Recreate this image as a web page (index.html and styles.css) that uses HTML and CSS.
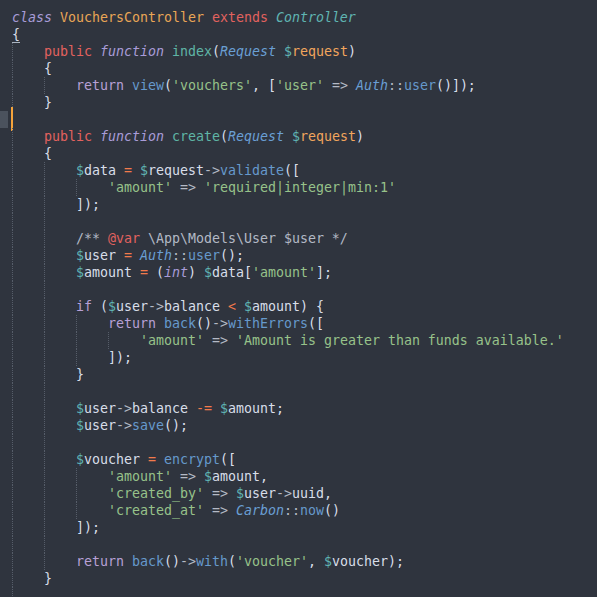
FILE: index.html
```html
<!DOCTYPE html>
<html>
<head>
<meta charset="utf-8">
<link rel="stylesheet" href="styles.css">
</head>
<body>
<div class="editor">
<div class="l"><span class="k">class</span> <span class="cn">VouchersController</span> <span class="m">extends</span> <span class="ct">Controller</span></div>
<div class="l"><span class="bm">{</span></div>
<div class="l"><i class="g"></i><span class="m">public</span> <span class="k">function</span> <span class="fn">index</span>(<span class="ty">Request</span> <span class="d">$</span><span class="p">request</span>)</div>
<div class="l"><i class="g"></i>{</div>
<div class="l"><i class="g"></i><i class="g"></i><span class="kr">return</span> <span class="f">view</span>(<span class="s">'vouchers'</span>, [<span class="s">'user'</span> <span class="op">=&gt;</span> <span class="ty">Auth</span><span class="op">::</span><span class="f">user</span>()]);</div>
<div class="l"><i class="g"></i>}</div>
<div class="l changed"><i class="g"></i></div>
<div class="l"><i class="g"></i><span class="m">public</span> <span class="k">function</span> <span class="fn">create</span>(<span class="ty">Request</span> <span class="d">$</span><span class="p">request</span>)</div>
<div class="l"><i class="g"></i>{</div>
<div class="l"><i class="g"></i><i class="g"></i><span class="d">$</span>data <span class="o">=</span> <span class="d">$</span>request<span class="op">-&gt;</span><span class="f">validate</span>([</div>
<div class="l"><i class="g"></i><i class="g"></i><i class="g"></i><span class="s">'amount'</span> <span class="op">=&gt;</span> <span class="s">'required|integer|min:1'</span></div>
<div class="l"><i class="g"></i><i class="g"></i>]);</div>
<div class="l"><i class="g"></i><i class="g"></i></div>
<div class="l"><i class="g"></i><i class="g"></i><span class="c">/** </span><span class="m">@var</span><span class="c"> \App\Models\User $user */</span></div>
<div class="l"><i class="g"></i><i class="g"></i><span class="d">$</span>user <span class="o">=</span> <span class="ty">Auth</span><span class="op">::</span><span class="f">user</span>();</div>
<div class="l"><i class="g"></i><i class="g"></i><span class="d">$</span>amount <span class="o">=</span> (<span class="k">int</span>) <span class="d">$</span>data[<span class="s">'amount'</span>];</div>
<div class="l"><i class="g"></i><i class="g"></i></div>
<div class="l"><i class="g"></i><i class="g"></i><span class="kr">if</span> (<span class="d">$</span>user<span class="op">-&gt;</span>balance <span class="o">&lt;</span> <span class="d">$</span>amount) {</div>
<div class="l"><i class="g"></i><i class="g"></i><i class="g"></i><span class="kr">return</span> <span class="f">back</span>()<span class="op">-&gt;</span><span class="f">withErrors</span>([</div>
<div class="l"><i class="g"></i><i class="g"></i><i class="g"></i><i class="g"></i><span class="s">'amount'</span> <span class="op">=&gt;</span> <span class="s">'Amount is greater than funds available.'</span></div>
<div class="l"><i class="g"></i><i class="g"></i><i class="g"></i>]);</div>
<div class="l"><i class="g"></i><i class="g"></i>}</div>
<div class="l"><i class="g"></i><i class="g"></i></div>
<div class="l"><i class="g"></i><i class="g"></i><span class="d">$</span>user<span class="op">-&gt;</span>balance <span class="o">-=</span> <span class="d">$</span>amount;</div>
<div class="l"><i class="g"></i><i class="g"></i><span class="d">$</span>user<span class="op">-&gt;</span><span class="f">save</span>();</div>
<div class="l"><i class="g"></i><i class="g"></i></div>
<div class="l"><i class="g"></i><i class="g"></i><span class="d">$</span>voucher <span class="o">=</span> <span class="f">encrypt</span>([</div>
<div class="l"><i class="g"></i><i class="g"></i><i class="g"></i><span class="s">'amount'</span> <span class="op">=&gt;</span> <span class="d">$</span>amount,</div>
<div class="l"><i class="g"></i><i class="g"></i><i class="g"></i><span class="s">'created_by'</span> <span class="op">=&gt;</span> <span class="d">$</span>user<span class="op">-&gt;</span>uuid,</div>
<div class="l"><i class="g"></i><i class="g"></i><i class="g"></i><span class="s">'created_at'</span> <span class="op">=&gt;</span> <span class="ty">Carbon</span><span class="op">::</span><span class="f">now</span>()</div>
<div class="l"><i class="g"></i><i class="g"></i>]);</div>
<div class="l"><i class="g"></i><i class="g"></i></div>
<div class="l"><i class="g"></i><i class="g"></i><span class="kr">return</span> <span class="f">back</span>()<span class="op">-&gt;</span><span class="f">with</span>(<span class="s">'voucher'</span>, <span class="d">$</span>voucher);</div>
<div class="l"><i class="g"></i>}</div>
<div class="l"><i class="g"></i></div>
</div>
</body>
</html>
```

FILE: styles.css
```css
html, body {
  margin: 0;
  padding: 0;
  background: #2f343e;
  height: 100%;
  overflow: hidden;
}

.editor {
  padding: 8.5px 0 0 12px;
  font-family: "DejaVu Sans Mono", monospace;
  font-size: 13.29px;
  line-height: 17px;
  color: #d8dee9;
}

.l {
  position: relative;
  display: block;
  height: 17px;
  white-space: pre;
}

.g {
  display: inline-block;
  vertical-align: top;
  width: 32px;
  height: 17px;
  background-image: linear-gradient(to bottom, #565d69 50%, transparent 50%);
  background-size: 1px 2px;
  background-repeat: repeat-y;
  background-position: 0 0;
}

.changed::before {
  content: "";
  position: absolute;
  left: -12px;
  top: 0.5px;
  width: 8px;
  height: 17px;
  background: #4b525d;
}

.changed::after {
  content: "";
  position: absolute;
  left: -1px;
  top: -3.5px;
  width: 2px;
  height: 24px;
  background: #f5a33b;
}

.k { color: #a99cd8; font-style: italic; }
.kr { color: #b8a0d6; }
.m { color: #e2625f; }
.cn { color: #eaa656; }
.ct { color: #5fb5b2; font-style: italic; }
.ty { color: #6a9fd4; font-style: italic; }
.fn { color: #5fb5a6; }
.f { color: #6699cc; }
.d { color: #5fb3b3; }
.p { color: #f2a55d; }
.s { color: #97c28a; }
.o { color: #f27a4c; }
.op { color: #b4bac5; }
.c { color: #b3b9c5; }
.bm { border-bottom: 1px solid #aab4c0; }
```
